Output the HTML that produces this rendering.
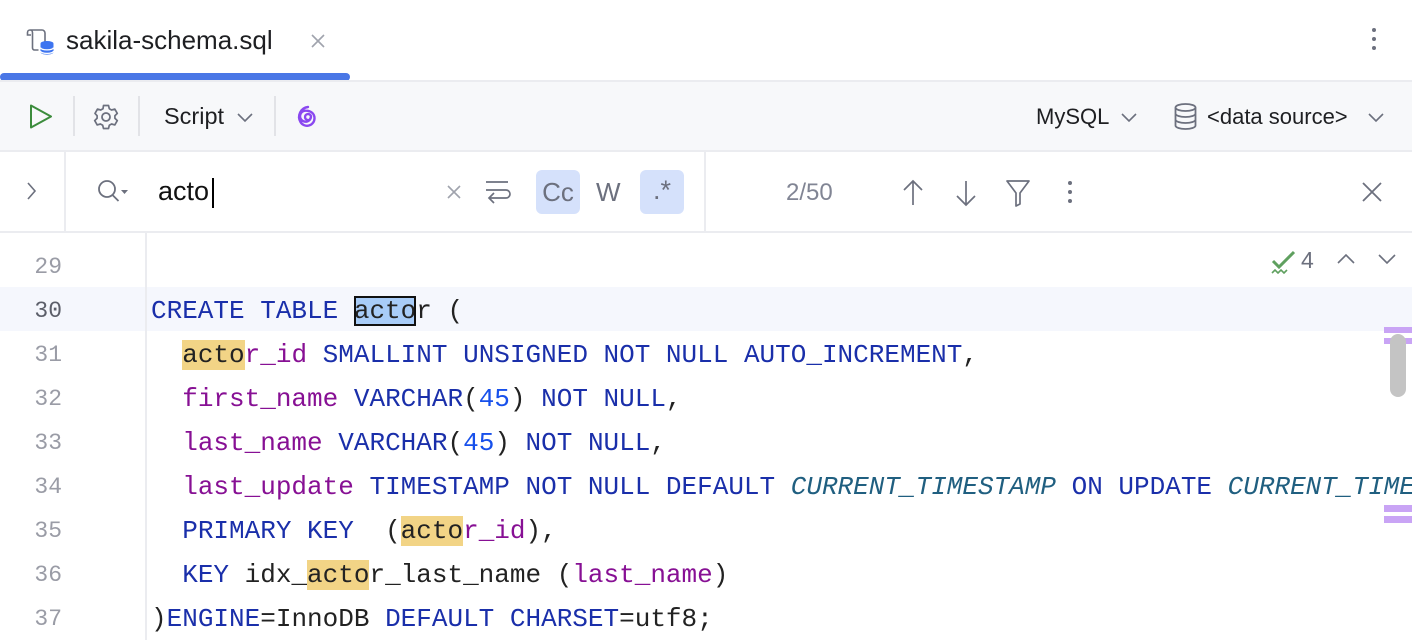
<!DOCTYPE html>
<html><head><meta charset="utf-8"><style>
*{margin:0;padding:0;box-sizing:border-box}
body{width:1412px;height:640px;overflow:hidden;background:#fff;font-family:"Liberation Sans",sans-serif;position:relative;color:#222}
.a{position:absolute}
.ui{font-size:22px;color:#1e1f22}
.code{font-family:"Liberation Mono",monospace;font-size:26px;white-space:pre;line-height:44px;margin-top:2px}
.ln{font-family:"Liberation Mono",monospace;font-size:23px;color:#9a9ca6;width:62px;text-align:right;line-height:44px;margin-top:2px}
.k{color:#1a2faa}.p{color:#871094}.n{color:#1750eb}.f{color:#205f80;font-style:italic}
.m{background:#f2d486}
.cur{background:#a8ccf8;outline:2px solid #111;outline-offset:-2px}
.mk{background:#c9a4f5}
#ed{position:absolute;left:151px;top:0;width:1261px;height:640px;overflow:hidden}
</style></head><body>
<!-- tab bar -->
<svg class="a" style="left:26px;top:28px" width="32" height="28" viewBox="0 0 32 28"><path d="M4 2h12a3 3 0 0 1 3 3v9M4 2a2.5 2.5 0 0 0-2.5 2.5V7H5M4 2a2.5 2.5 0 0 1 2.5 2.5V20a2 2 0 0 0 2 2h4" fill="none" stroke="#6c707e" stroke-width="1.6"/><ellipse cx="21" cy="15.5" rx="6.5" ry="2.5" fill="#3d74f0"/><path d="M14.5 16v8c0 1.6 3 2.6 6.5 2.6s6.5-1 6.5-2.6v-8" fill="#3d74f0"/><path d="M14.5 19.5c0 1.4 3 2.4 6.5 2.4s6.5-1 6.5-2.4M14.5 23c0 1.4 3 2.4 6.5 2.4s6.5-1 6.5-2.4" stroke="#fff" stroke-width="1.3" fill="none"/></svg>
<div class="a ui" style="left:66px;top:25px;font-size:26px">sakila-schema.sql</div>
<svg class="a" style="left:310px;top:33px" width="16" height="16"><path d="M2 2l12 12M14 2L2 14" stroke="#a0a3ad" stroke-width="1.6"/></svg>
<div class="a" style="left:1372px;top:28px;width:5px">
 <div style="width:4px;height:4px;border-radius:2px;background:#6c707e;margin-bottom:5px"></div><div style="width:4px;height:4px;border-radius:2px;background:#6c707e;margin-bottom:5px"></div><div style="width:4px;height:4px;border-radius:2px;background:#6c707e"></div></div>
<div class="a" style="left:0;top:73px;width:350px;height:8px;background:#4a77e6;border-radius:4px"></div>
<!-- toolbar -->
<div class="a" style="left:0;top:80px;width:1412px;height:72px;background:#f7f8fa;border-top:2px solid #ebecf0;border-bottom:2px solid #ebecf0"></div>
<svg class="a" style="left:28px;top:103px" width="26" height="28"><path d="M3 2.5v22L23 13.5z" fill="none" stroke="#3c8c3c" stroke-width="2" stroke-linejoin="round"/></svg>
<div class="a" style="left:73px;top:96px;width:2px;height:40px;background:#e2e3e7"></div>
<svg class="a" style="left:92px;top:103px" width="28" height="28" viewBox="0 0 28 28"><circle cx="14" cy="14" r="4" fill="none" stroke="#6c707e" stroke-width="1.8"/><path d="M11.5 2.5h5l.8 3.2 2.3 1.3 3.2-.9 2.5 4.3-2.4 2.3v2.6l2.4 2.3-2.5 4.3-3.2-.9-2.3 1.3-.8 3.2h-5l-.8-3.2-2.3-1.3-3.2.9-2.5-4.3 2.4-2.3v-2.6L3 10.4l2.5-4.3 3.2.9L11 5.7z" fill="none" stroke="#6c707e" stroke-width="1.7" stroke-linejoin="round"/></svg>
<div class="a" style="left:138px;top:96px;width:2px;height:40px;background:#e2e3e7"></div>
<div class="a ui" style="left:164px;top:103px;font-size:23.5px">Script</div>
<svg class="a" style="left:236px;top:112px" width="18" height="12"><path d="M2 2l7 7 7-7" fill="none" stroke="#6c707e" stroke-width="1.6"/></svg>
<div class="a" style="left:274px;top:96px;width:2px;height:40px;background:#e2e3e7"></div>
<svg class="a" style="left:294px;top:103px" width="28" height="28" viewBox="0 0 28 28"><path d="M14 17a3 3 0 1 1 3-3.5M17 13.5a5.5 5.5 0 1 1-5-5.8c5 0 8.5 3 8.5 7.5A7.5 7.5 0 0 1 6.5 19a10 10 0 0 1 7.5-15" fill="none" stroke="#8a48f0" stroke-width="2.4" stroke-linecap="round"/></svg>
<div class="a ui" style="left:1036px;top:104px">MySQL</div>
<svg class="a" style="left:1120px;top:112px" width="18" height="12"><path d="M2 2l7 7 7-7" fill="none" stroke="#6c707e" stroke-width="1.6"/></svg>
<svg class="a" style="left:1173px;top:102px" width="26" height="30" viewBox="0 0 26 30"><ellipse cx="12.5" cy="5.5" rx="10" ry="3.5" fill="none" stroke="#6c707e" stroke-width="1.8"/><path d="M2.5 5.5v18c0 2 4.5 3.5 10 3.5s10-1.5 10-3.5v-18M2.5 11.5c0 2 4.5 3.5 10 3.5s10-1.5 10-3.5M2.5 17.5c0 2 4.5 3.5 10 3.5s10-1.5 10-3.5" fill="none" stroke="#6c707e" stroke-width="1.8"/></svg>
<div class="a ui" style="left:1207px;top:104px">&lt;data source&gt;</div>
<svg class="a" style="left:1367px;top:112px" width="18" height="12"><path d="M2 2l7 7 7-7" fill="none" stroke="#6c707e" stroke-width="1.6"/></svg>
<!-- search bar -->
<div class="a" style="left:0;top:231px;width:1412px;height:2px;background:#ebecf0"></div>
<div class="a" style="left:64px;top:152px;width:2px;height:80px;background:#ebecf0"></div>
<div class="a" style="left:704px;top:152px;width:2px;height:80px;background:#ebecf0"></div>
<svg class="a" style="left:24px;top:180px" width="14" height="22"><path d="M4 3l7 8-7 8" fill="none" stroke="#6c707e" stroke-width="1.6"/></svg>
<svg class="a" style="left:96px;top:178px" width="36" height="28"><circle cx="11" cy="11" r="8" fill="none" stroke="#6c707e" stroke-width="1.8"/><path d="M16.5 17l6 6" stroke="#6c707e" stroke-width="1.8"/><path d="M25 12h7l-3.5 4z" fill="#6c707e"/></svg>
<div class="a" style="left:158px;top:176px;font-size:27px;color:#111">acto</div>
<div class="a" style="left:212px;top:178px;width:2px;height:30px;background:#000"></div>
<svg class="a" style="left:446px;top:184px" width="16" height="16"><path d="M2 2l12 12M14 2L2 14" stroke="#a0a3ad" stroke-width="1.6"/></svg>
<svg class="a" style="left:482px;top:178px" width="30" height="30"><path d="M4 4h22M4 12h20a4 4 0 0 1 0 8H8" fill="none" stroke="#6c707e" stroke-width="1.7"/><path d="M12 15l-5 5 5 5" fill="none" stroke="#6c707e" stroke-width="1.7"/></svg>
<div class="a" style="left:536px;top:170px;width:44px;height:44px;background:#d5e1fb;border-radius:6px;font-size:26px;color:#6c707e;text-align:center;line-height:44px">Cc</div>
<div class="a" style="left:596px;top:170px;font-size:26px;color:#6c707e;line-height:44px">W</div>
<div class="a" style="left:640px;top:170px;width:44px;height:44px;background:#d5e1fb;border-radius:6px;font-size:27px;color:#6c707e;text-align:center;line-height:40px">.*</div>
<div class="a" style="left:786px;top:179px;font-size:24px;color:#818594">2/50</div>
<svg class="a" style="left:900px;top:178px" width="26" height="30"><path d="M13 3v24M4 12l9-9 9 9" fill="none" stroke="#6c707e" stroke-width="1.7"/></svg>
<svg class="a" style="left:953px;top:178px" width="26" height="30"><path d="M13 3v24M4 18l9 9 9-9" fill="none" stroke="#6c707e" stroke-width="1.7"/></svg>
<svg class="a" style="left:1004px;top:178px" width="28" height="30"><path d="M3 3h22L16 15v11l-4 2V15z" fill="none" stroke="#6c707e" stroke-width="1.7" stroke-linejoin="round"/></svg>
<div class="a" style="left:1068px;top:181px;width:5px"><div style="width:4px;height:4px;border-radius:2px;background:#6c707e;margin-bottom:5px"></div><div style="width:4px;height:4px;border-radius:2px;background:#6c707e;margin-bottom:5px"></div><div style="width:4px;height:4px;border-radius:2px;background:#6c707e"></div></div>
<svg class="a" style="left:1360px;top:180px" width="24" height="24"><path d="M3 3l18 18M21 3L3 21" stroke="#6c707e" stroke-width="1.8"/></svg>
<!-- editor -->
<div class="a" style="left:0;top:287px;width:1412px;height:44px;background:#f5f7fd"></div>
<div class="a" style="left:145px;top:233px;width:2px;height:407px;background:#ebecf0"></div>
<svg class="a" style="left:1270px;top:248px" width="28" height="28"><path d="M3 13l6 6L24 4" fill="none" stroke="#5fa05f" stroke-width="3"/><path d="M2 25l3-3 3 3 3-3 3 3 3-3" fill="none" stroke="#5fa05f" stroke-width="1.6"/></svg>
<div class="a" style="left:1301px;top:247px;font-size:23px;color:#6c707e">4</div>
<svg class="a" style="left:1336px;top:252px" width="20" height="14"><path d="M2 11l8-8 8 8" fill="none" stroke="#6c707e" stroke-width="1.6"/></svg>
<svg class="a" style="left:1377px;top:252px" width="20" height="14"><path d="M2 3l8 8 8-8" fill="none" stroke="#6c707e" stroke-width="1.6"/></svg>

<div class="a ln" style="left:0;top:243px">29</div>
<div class="a ln" style="left:0;top:287px;color:#5c5f6a">30</div>
<div class="a ln" style="left:0;top:331px">31</div>
<div class="a ln" style="left:0;top:375px">32</div>
<div class="a ln" style="left:0;top:419px">33</div>
<div class="a ln" style="left:0;top:463px">34</div>
<div class="a ln" style="left:0;top:507px">35</div>
<div class="a ln" style="left:0;top:551px">36</div>
<div class="a ln" style="left:0;top:595px">37</div>

<div id="ed">
<div class="a code" style="left:0;top:287px"><span class="k">CREATE TABLE</span> <span class="cur">acto</span>r (</div>
<div class="a code" style="left:0;top:331px">  <span class="m">acto</span><span class="p">r_id</span> <span class="k">SMALLINT UNSIGNED NOT NULL AUTO_INCREMENT</span>,</div>
<div class="a code" style="left:0;top:375px">  <span class="p">first_name</span> <span class="k">VARCHAR</span>(<span class="n">45</span>) <span class="k">NOT NULL</span>,</div>
<div class="a code" style="left:0;top:419px">  <span class="p">last_name</span> <span class="k">VARCHAR</span>(<span class="n">45</span>) <span class="k">NOT NULL</span>,</div>
<div class="a code" style="left:0;top:463px">  <span class="p">last_update</span> <span class="k">TIMESTAMP NOT NULL DEFAULT</span> <span class="f">CURRENT_TIMESTAMP</span> <span class="k">ON UPDATE</span> <span class="f">CURRENT_TIME</span></div>
<div class="a code" style="left:0;top:507px">  <span class="k">PRIMARY KEY</span>  (<span class="m">acto</span><span class="p">r_id</span>),</div>
<div class="a code" style="left:0;top:551px">  <span class="k">KEY</span> idx_<span class="m">acto</span>r_last_name (<span class="p">last_name</span>)</div>
<div class="a code" style="left:0;top:595px">)<span class="k">ENGINE</span>=InnoDB <span class="k">DEFAULT CHARSET</span>=utf8;</div>
</div>
<div class="a mk" style="left:1384px;top:327px;width:28px;height:6px"></div>
<div class="a mk" style="left:1384px;top:338px;width:28px;height:6px"></div>
<div class="a mk" style="left:1384px;top:505px;width:28px;height:7px"></div>
<div class="a mk" style="left:1384px;top:516px;width:28px;height:7px"></div>
<div class="a" style="left:1390px;top:334px;width:16px;height:63px;border-radius:8px;background:#c4c4c4"></div>
</body></html>
